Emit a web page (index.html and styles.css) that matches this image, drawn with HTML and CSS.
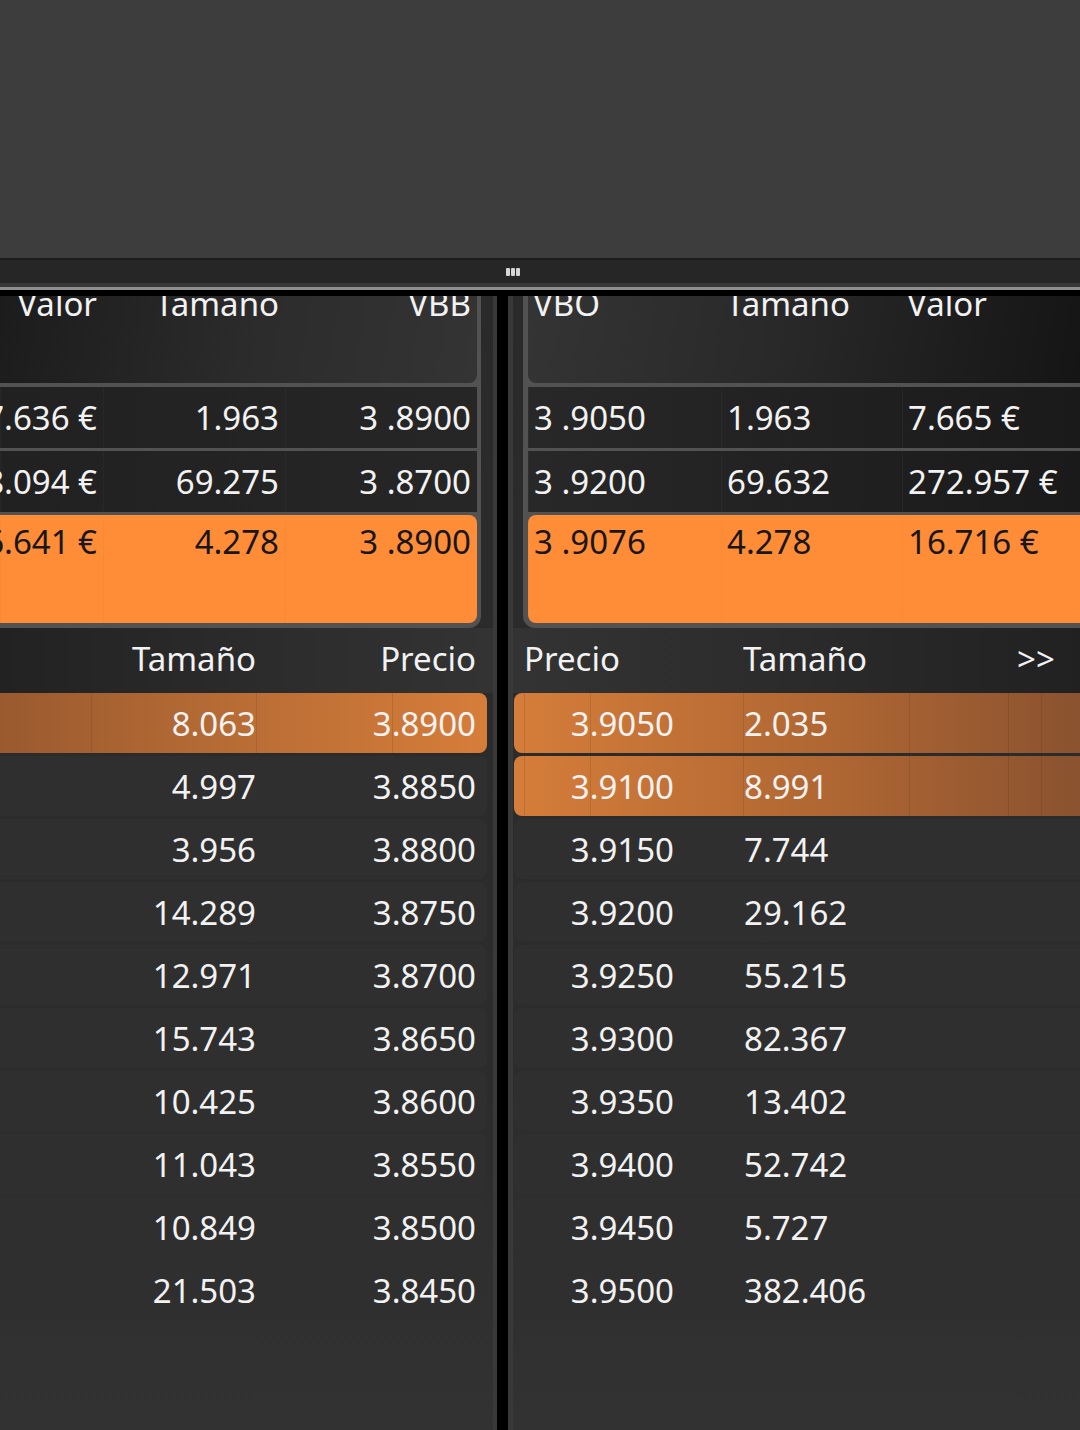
FILE: index.html
```html
<!DOCTYPE html>
<html lang="es">
<head>
  <meta charset="UTF-8">
  <meta name="viewport" content="width=device-width, initial-scale=1.0">
  <title>Libro de órdenes</title>
  <link rel="stylesheet" href="styles.css">
</head>
<body>

<div class="top-pane"></div>

<div class="splitter">
  <span class="grip"><i></i><i></i><i></i></span>
</div>

<div class="book">
  <div class="side bid">
    <div class="summary">
      <div class="sum-head">
        <span>Valor</span><span>Tamaño</span><span>VBB</span>
      </div>
      <div class="sum-row">
        <span>7.636 €</span><span>1.963</span><span>3 .8900</span>
      </div>
      <div class="sum-row">
        <span>268.094 €</span><span>69.275</span><span>3 .8700</span>
      </div>
      <div class="sum-row total">
        <span>16.641 €</span><span>4.278</span><span>3 .8900</span>
      </div>
    </div>

    <div class="depth-head">
      <span></span><span>Tamaño</span><span>Precio</span>
    </div>
    <div class="depth-list">
      <div class="depth-row bar"><span></span><span>8.063</span><span>3.8900</span></div>
      <div class="depth-row"><span></span><span>4.997</span><span>3.8850</span></div>
      <div class="depth-row"><span></span><span>3.956</span><span>3.8800</span></div>
      <div class="depth-row"><span></span><span>14.289</span><span>3.8750</span></div>
      <div class="depth-row"><span></span><span>12.971</span><span>3.8700</span></div>
      <div class="depth-row"><span></span><span>15.743</span><span>3.8650</span></div>
      <div class="depth-row"><span></span><span>10.425</span><span>3.8600</span></div>
      <div class="depth-row"><span></span><span>11.043</span><span>3.8550</span></div>
      <div class="depth-row"><span></span><span>10.849</span><span>3.8500</span></div>
      <div class="depth-row"><span></span><span>21.503</span><span>3.8450</span></div>
    </div>
  </div>

  <div class="side ask">
    <div class="summary">
      <div class="sum-head">
        <span>VBO</span><span>Tamaño</span><span>Valor</span>
      </div>
      <div class="sum-row">
        <span>3 .9050</span><span>1.963</span><span>7.665 €</span>
      </div>
      <div class="sum-row">
        <span>3 .9200</span><span>69.632</span><span>272.957 €</span>
      </div>
      <div class="sum-row total">
        <span>3 .9076</span><span>4.278</span><span>16.716 €</span>
      </div>
    </div>

    <div class="depth-head">
      <span>Precio</span><span>Tamaño</span><span>&gt;&gt;</span>
    </div>
    <div class="depth-list">
      <div class="depth-row bar"><span>3.9050</span><span>2.035</span></div>
      <div class="depth-row bar"><span>3.9100</span><span>8.991</span></div>
      <div class="depth-row"><span>3.9150</span><span>7.744</span></div>
      <div class="depth-row"><span>3.9200</span><span>29.162</span></div>
      <div class="depth-row"><span>3.9250</span><span>55.215</span></div>
      <div class="depth-row"><span>3.9300</span><span>82.367</span></div>
      <div class="depth-row"><span>3.9350</span><span>13.402</span></div>
      <div class="depth-row"><span>3.9400</span><span>52.742</span></div>
      <div class="depth-row"><span>3.9450</span><span>5.727</span></div>
      <div class="depth-row"><span>3.9500</span><span>382.406</span></div>
    </div>
  </div>
</div>

</body>
</html>
```

FILE: styles.css
```css
body {
  margin: 0;
  width: 1080px;
  height: 1430px;
  overflow: hidden;
  background: #2b2b2b;
  font-family: "Noto Sans", "Open Sans", sans-serif;
  font-size: 33px;
  color: #f2f2f2;
}

.top-pane {
  height: 258px;
  background: #3d3d3d;
}

/* drag handle between the panes */
.splitter {
  height: 24px;
  padding: 0 0 3px 506px;
  display: flex;
  align-items: center;
  background: #262626;
  border-top: 2px solid #1d1d1d;
  border-bottom: 3px solid #8e8e8e;
  box-shadow: inset 0 -4px 0 #373737;
}

.grip {
  display: flex;
  gap: 1px;
}

.grip i {
  width: 4px;
  height: 8px;
  border-radius: 1px;
  background: #d6d6d6;
}

.book {
  display: flex;
  gap: 11px;
  height: 1134px;
  padding-top: 6px;
  background: #000;
}

.side {
  overflow: hidden;
  background: linear-gradient(#2a2a2a, #2c2c2c 70%, #323232);
}

.bid {
  width: 493px;
  border-right: 4px solid #393939;
}

.ask {
  flex: 1;
  border-left: 5px solid #393939;
}

/* summary table (VBB / VBO) */
.summary {
  background: #525252;
  padding-bottom: 5px;
}

.bid .summary {
  width: 477px;
  padding-right: 4px;
  border-bottom-right-radius: 12px;
}

.ask .summary {
  margin-left: 10px;
  padding-left: 5px;
  border-bottom-left-radius: 12px;
}

.sum-head,
.sum-row {
  display: grid;
  line-height: 40px;
}

.bid .sum-head,
.bid .sum-row {
  grid-template-columns: 103px 182px 192px;
}

.ask .sum-head,
.ask .sum-row {
  grid-template-columns: 193px 181px 178px;
}

.sum-head span,
.sum-row span {
  display: flex;
  padding: 0 6px;
  white-space: nowrap;
}

.ask .sum-head span,
.ask .sum-row span {
  padding: 0 5px;
}

.bid .sum-head span,
.bid .sum-row span {
  justify-content: flex-end;
}

.sum-head {
  height: 87px;
  margin-bottom: 4px;
  overflow: hidden;
}

.sum-head span {
  margin-top: -12px;
}

.bid .sum-head {
  background: linear-gradient(100deg, #1c1c1c, #2c2c2c 55%, #343434);
  border-bottom-right-radius: 8px;
}

.ask .sum-head {
  background: linear-gradient(100deg, #343434, #292929 45%, #151515);
  border-bottom-left-radius: 8px;
}

.sum-row {
  height: 61px;
  margin-bottom: 3px;
}

.sum-row span {
  align-items: center;
  border-left: 1px solid rgba(255, 255, 255, 0.03);
}

.bid .sum-row {
  background: linear-gradient(to right, #212121, #262626);
}

.ask .sum-row {
  background: linear-gradient(to right, #282828, #1a1a1a);
}

.sum-row.total {
  height: 101px;
  padding-top: 7px;
  margin-bottom: 0;
  background: #ff8c37;
  color: #171717;
}

.sum-row.total span {
  align-items: flex-start;
  border-left-color: rgba(0, 0, 0, 0.02);
}

.bid .sum-row.total {
  border-radius: 0 8px 8px 0;
}

.ask .sum-row.total {
  border-radius: 8px 0 0 8px;
}

/* market depth */
.depth-head {
  display: grid;
  align-items: center;
  height: 60px;
  padding-bottom: 5px;
}

.bid .depth-head {
  grid-template-columns: 91px 165px 220px;
  text-align: right;
  background: linear-gradient(to right, #222222, #2d2d2d 60%, #333333);
}

.ask .depth-head {
  grid-template-columns: 219px 274px auto;
  padding-left: 11px;
  background: linear-gradient(to right, #333333, #2b2b2b 50%, #212121);
}

.depth-list {
  display: flex;
  flex-direction: column;
  gap: 3px;
}

.depth-row {
  display: grid;
  align-items: center;
  height: 60px;
  background: #2f2f2f;
}

.bid .depth-row {
  width: 487px;
  grid-template-columns: 91px 165px 220px;
  text-align: right;
  border-radius: 0 8px 8px 0;
}

.ask .depth-row {
  width: 620px;
  margin-left: 1px;
  grid-template-columns: 160px auto;
  column-gap: 70px;
  justify-content: start;
  border-radius: 8px 0 0 8px;
}

.ask .depth-row span:first-child {
  text-align: right;
}

.bid .depth-row.bar {
  background:
    linear-gradient(rgba(0, 0, 0, 0.1), rgba(0, 0, 0, 0.1)) 91px 0 / 1px 100% no-repeat,
    linear-gradient(rgba(0, 0, 0, 0.1), rgba(0, 0, 0, 0.1)) 256px 0 / 1px 100% no-repeat,
    linear-gradient(rgba(0, 0, 0, 0.1), rgba(0, 0, 0, 0.1)) 392px 0 / 1px 100% no-repeat,
    linear-gradient(to right, #9a5a2f, #b96d35 50%, #d67d3a);
}

.ask .depth-row.bar {
  background:
    linear-gradient(rgba(0, 0, 0, 0.1), rgba(0, 0, 0, 0.1)) 10px 0 / 1px 100% no-repeat,
    linear-gradient(rgba(0, 0, 0, 0.1), rgba(0, 0, 0, 0.1)) 76px 0 / 1px 100% no-repeat,
    linear-gradient(rgba(0, 0, 0, 0.1), rgba(0, 0, 0, 0.1)) 229px 0 / 1px 100% no-repeat,
    linear-gradient(rgba(0, 0, 0, 0.1), rgba(0, 0, 0, 0.1)) 395px 0 / 1px 100% no-repeat,
    linear-gradient(rgba(0, 0, 0, 0.1), rgba(0, 0, 0, 0.1)) 494px 0 / 1px 100% no-repeat,
    linear-gradient(rgba(0, 0, 0, 0.1), rgba(0, 0, 0, 0.1)) 527px 0 / 1px 100% no-repeat,
    linear-gradient(to right, #d57d3a, #b06733 50%, #8a5230 92%);
}
```
